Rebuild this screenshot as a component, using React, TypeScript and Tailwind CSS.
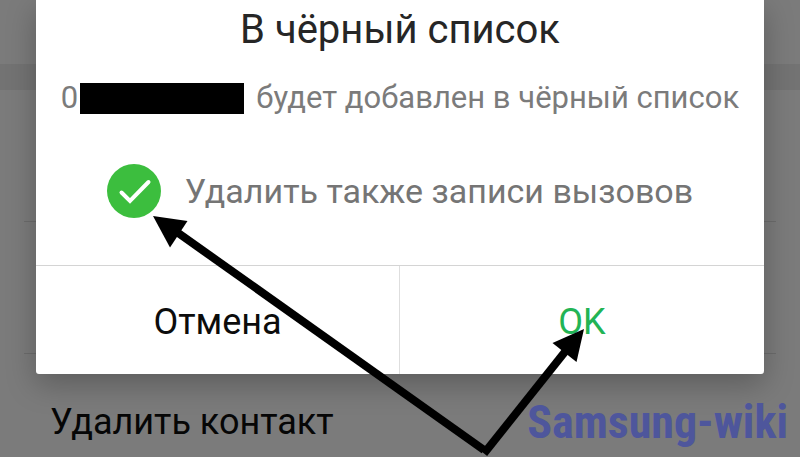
import { useState } from "react"

function Background() {
  return (
    <div className="flex flex-col">
      <div className="h-16" />
      <div className="h-[26px] bg-[#737373]" />
      <div className="mx-6 h-[132px] border-b border-[#6c6c6c]" />
      <div className="mx-6 h-[132px] border-b border-[#6c6c6c]" />
      <button type="button" className="mx-6 flex h-[136px] items-center pl-[26px] text-left text-[36px] leading-10 text-[#060606]">
        Удалить контакт
      </button>
    </div>
  )
}

interface CheckOptionProps {
  label: string
  checked: boolean
  onChange: (checked: boolean) => void
}

function CheckOption({ label, checked, onChange }: CheckOptionProps) {
  return (
    <label className="flex cursor-pointer items-center gap-6 whitespace-nowrap text-[34px] leading-10 text-[#757575]">
      <span className="relative size-[54px] shrink-0">
        <input
          type="checkbox"
          checked={checked}
          onChange={(e) => onChange(e.target.checked)}
          className="block size-full appearance-none rounded-full border-2 border-gray-300 checked:border-0 checked:bg-[#3cbe3e]"
        />
        {checked && (
          <svg viewBox="0 0 54 54" className="pointer-events-none absolute inset-0 size-full" fill="none">
            <path d="M14.5 28.5 L23 37 L41.5 18" stroke="#fff" strokeWidth="4" strokeLinecap="round" />
          </svg>
        )}
      </span>
      {label}
    </label>
  )
}

function Arrows() {
  return (
    <svg
      viewBox="0 0 800 457"
      className="pointer-events-none absolute top-0 left-1/2 h-[457px] w-[800px] -translate-x-1/2"
      aria-hidden="true"
    >
      <path d="M174 230 L484 450" stroke="#000" strokeWidth="8" />
      <path d="M484 453.5 L568 348" stroke="#000" strokeWidth="8" />
      <path d="M153 216 L187.5 221 L170 247.5 Z" />
      <path d="M584 329 L552.5 343 L576.5 362 Z" />
    </svg>
  )
}

export default function App() {
  const [deleteCalls, setDeleteCalls] = useState(true)

  return (
    <main className="relative h-screen overflow-hidden bg-[#7b7b7b] font-[Roboto,sans-serif]">
      <Background />

      <section
        role="dialog"
        aria-labelledby="dialog-title"
        className="absolute inset-x-9 top-0 flex flex-col rounded-b-[3px] bg-white shadow-[0_10px_30px_0_rgba(0,0,0,0.25)]"
      >
        <div className="flex h-[265px] flex-col items-center">
          <h1 id="dialog-title" className="mt-[10px] text-[40px] leading-10 text-[#262626]">
            В чёрный список
          </h1>
          <p className="mt-7 flex items-center whitespace-nowrap text-[31px] leading-10 text-[#7b7b7b]">
            0
            <span className="mr-3 ml-0.5 h-[31px] w-[164px] bg-black" />
            будет добавлен в чёрный список
          </p>
          <div className="mt-[46px]">
            <CheckOption label="Удалить также записи вызовов" checked={deleteCalls} onChange={setDeleteCalls} />
          </div>
        </div>
        <div className="grid h-[109px] grid-cols-2 divide-x divide-[#dedede] border-t border-[#d4d4d4] text-[36px] leading-10">
          <button type="button" className="pt-1 text-[#0c0c0c]">
            Отмена
          </button>
          <button type="button" className="pt-1 text-[#22b455]">
            OK
          </button>
        </div>
      </section>

      <div className="absolute right-3 bottom-2 font-['Roboto_Condensed','Liberation_Sans',sans-serif] text-[46px] leading-[54px] font-bold text-[#4e569c]">
        Samsung-wiki
      </div>

      <Arrows />
    </main>
  )
}
